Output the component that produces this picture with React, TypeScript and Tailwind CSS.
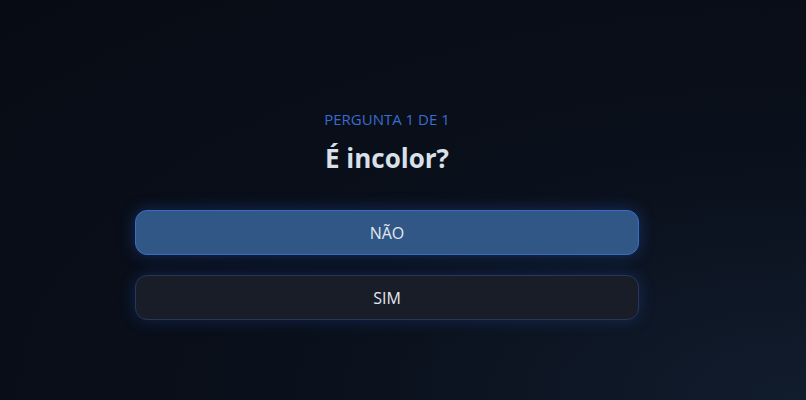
import React from "react";

export default function App() {
  const options = [
    { label: "NÃO", selected: true },
    { label: "SIM", selected: false },
  ];

  return (
    <div
      className="h-[400px] w-[806px] overflow-hidden bg-[radial-gradient(ellipse_at_100%_100%,#111c2d_0%,#0a101b_45%,#070b14_100%)] pr-[32px]"
      style={{ fontFamily: '"Open Sans", "Noto Sans", sans-serif' }}
    >
      <div className="flex flex-col items-center pt-[108px]">
        <p className="text-[15px] leading-[22px] text-[#3a6bd0]">PERGUNTA 1 DE 1</p>
        <h1 className="mt-[10px] text-[26px] font-bold leading-[36px] text-[#d9e0ea]">É incolor?</h1>

        {/* options */}
        <div className="mt-[34px] flex w-[504px] flex-col gap-[20px]">
          {options.map((o) =>
            o.selected ? (
              <button
                key={o.label}
                className="h-[45px] rounded-[12px] border border-[#3b6bc8] bg-[#315787] text-[16px] text-[#e3e8f0] shadow-[0_0_16px_rgba(45,100,220,0.35)]"
              >
                {o.label}
              </button>
            ) : (
              <button
                key={o.label}
                className="h-[45px] rounded-[12px] border border-[#27375a] bg-[#191d27] text-[16px] text-[#e3e8f0] shadow-[0_0_16px_rgba(40,90,200,0.3)]"
              >
                {o.label}
              </button>
            )
          )}
        </div>
      </div>
    </div>
  );
}
